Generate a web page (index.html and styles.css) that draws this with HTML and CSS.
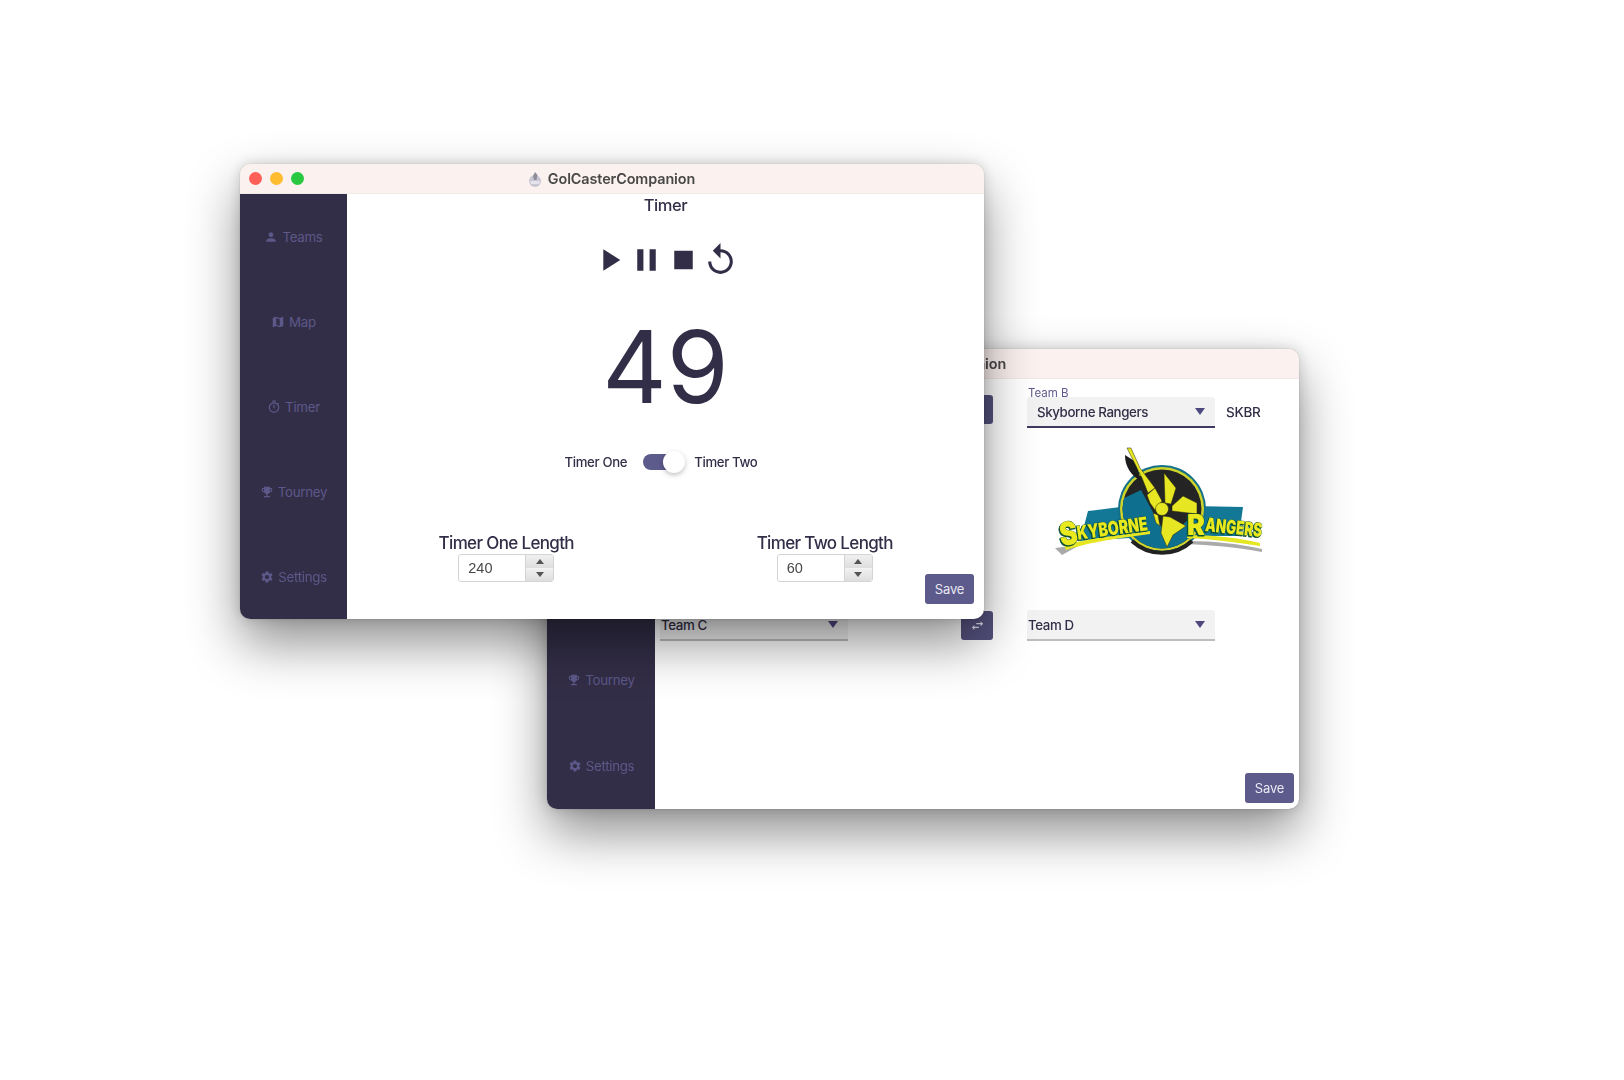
FILE: index.html
```html
<!DOCTYPE html>
<html lang="en">
<head>
<meta charset="utf-8">
<title>GolCasterCompanion</title>
<link rel="stylesheet" href="styles.css">
</head>
<body>
<svg class="defs" width="0" height="0" aria-hidden="true">
  <symbol id="i-person" viewBox="0 0 24 24"><path d="M12 12c2.21 0 4-1.79 4-4s-1.79-4-4-4-4 1.79-4 4 1.79 4 4 4zm0 2c-2.67 0-8 1.34-8 4v2h16v-2c0-2.66-5.33-4-8-4z"/></symbol>
  <symbol id="i-map" viewBox="0 0 24 24"><path d="M20.5 3l-.16.03L15 5.1 9 3 3.36 4.9c-.21.07-.36.25-.36.48V20.5c0 .28.22.5.5.5l.16-.03L9 18.9l6 2.1 5.64-1.9c.21-.07.36-.25.36-.48V3.5c0-.28-.22-.5-.5-.5zM15 19l-6-2.11V5l6 2.11V19z"/></symbol>
  <symbol id="i-timer" viewBox="0 0 24 24"><path d="M15 1H9v2h6V1zm-4 13h2V8h-2v6zm8.03-6.61l1.42-1.42c-.43-.51-.9-.99-1.41-1.41l-1.42 1.42C16.07 4.74 14.12 4 12 4c-4.97 0-9 4.03-9 9s4.02 9 9 9 9-4.03 9-9c0-2.12-.74-4.07-1.97-5.61zM12 20c-3.87 0-7-3.13-7-7s3.13-7 7-7 7 3.13 7 7-3.13 7-7 7z"/></symbol>
  <symbol id="i-trophy" viewBox="0 0 24 24"><path d="M19 5h-2V3H7v2H5c-1.1 0-2 .9-2 2v1c0 2.55 1.92 4.63 4.39 4.94.63 1.5 1.98 2.63 3.61 2.96V19H7v2h10v-2h-4v-3.1c1.63-.33 2.98-1.46 3.61-2.96C19.08 12.63 21 10.55 21 8V7c0-1.1-.9-2-2-2zM5 8V7h2v3.82C5.84 10.4 5 9.3 5 8zm14 0c0 1.3-.84 2.4-2 2.82V7h2v1z"/></symbol>
  <symbol id="i-cog" viewBox="0 0 24 24"><path d="M19.14 12.94c.04-.3.06-.61.06-.94 0-.32-.02-.64-.07-.94l2.03-1.58c.18-.14.23-.41.12-.61l-1.92-3.32c-.12-.22-.37-.29-.59-.22l-2.39.96c-.5-.38-1.03-.7-1.62-.94l-.36-2.54c-.04-.24-.24-.41-.48-.41h-3.84c-.24 0-.43.17-.47.41l-.36 2.54c-.59.24-1.13.57-1.62.94l-2.39-.96c-.22-.08-.47 0-.59.22L2.74 8.87c-.12.21-.08.47.12.61l2.03 1.58c-.05.3-.09.63-.09.94s.02.64.07.94l-2.03 1.58c-.18.14-.23.41-.12.61l1.92 3.32c.12.22.37.29.59.22l2.39-.96c.5.38 1.03.7 1.62.94l.36 2.54c.05.24.24.41.48.41h3.84c.24 0 .44-.17.47-.41l.36-2.54c.59-.24 1.13-.56 1.62-.94l2.39.96c.22.08.47 0 .59-.22l1.92-3.32c.12-.22.07-.47-.12-.61l-2.01-1.58zM12 15.6c-1.98 0-3.6-1.62-3.6-3.6s1.62-3.6 3.6-3.6 3.6 1.62 3.6 3.6-1.62 3.6-3.6 3.6z"/></symbol>
  <symbol id="i-swap" viewBox="0 0 24 24"><path d="M6.99 11L3 15l3.99 4v-3H14v-2H6.99v-3zM21 9l-3.99-4v3H10v2h7.01v3L21 9z"/></symbol>
  <symbol id="i-play" viewBox="0 0 24 24"><path d="M8 5v14l11-7z"/></symbol>
  <symbol id="i-pause" viewBox="0 0 24 24"><path d="M6 19h4V5H6v14zm8-14v14h4V5h-4z"/></symbol>
  <symbol id="i-stop" viewBox="0 0 24 24"><path d="M6 6h12v12H6z"/></symbol>
  <symbol id="i-replay" viewBox="0 0 24 24"><path d="M12 5V1L7 6l5 5V7c3.31 0 6 2.69 6 6s-2.69 6-6 6-6-2.69-6-6H4c0 4.42 3.58 8 8 8s8-3.58 8-8-3.58-8-8-8z"/></symbol>
  <symbol id="i-app" viewBox="0 0 16 16"><circle cx="8" cy="10" r="6" fill="#c9c6d3"/><path d="M8 1l2.5 3-1 5H7L6 5z" fill="#8f8c99"/><path d="M3 10h10l-1 3H4z" fill="#e4e2ea"/></symbol>
  <clipPath id="logo-disc"><circle cx="122" cy="71" r="39.5"/></clipPath>
</svg>

<section class="window window-back">
  <header class="titlebar">
    <div class="lights"><i class="light red"></i><i class="light amber"></i><i class="light green"></i></div>
    <div class="title-wrap"><svg class="app-icon"><use href="#i-app"/></svg><span class="title">GolCasterCompanion</span></div>
  </header>
  <div class="body">
    <nav class="sidebar">
      <a class="nav"></a>
      <a class="nav"></a>
      <a class="nav"></a>
      <a class="nav"><svg class="nav-icon"><use href="#i-trophy"/></svg>Tourney</a>
      <a class="nav"><svg class="nav-icon"><use href="#i-cog"/></svg>Settings</a>
    </nav>
    <main class="teams">
      <div class="team-col">
        <div class="select active"></div>
      </div>
      <div class="abbr"></div>
      <button class="swap"><svg class="swap-icon"><use href="#i-swap"/></svg></button>
      <div class="spacer"></div>
      <div class="team-col">
        <label class="field-label">Team B</label>
        <div class="select active"><span class="indent">Skyborne Rangers</span><i class="caret"></i></div>
      </div>
      <div class="abbr">SKBR</div>

      <div class="logo-row">
        <svg class="logo" viewBox="0 0 240 130" width="240" height="130" role="img" aria-label="Skyborne Rangers logo">
          <path class="l-shadow" d="M15 110 L40 107 L22 117z"/>
          <path class="l-shadow" d="M147 103 C175 103 200 106 222 111 L222 114 C195 109 170 107 147 106z"/>
          <path class="l-teal" d="M48 73 L88 68 L90 100 L40 103z"/>
          <path class="l-teal" d="M152 68 L203 69 L199 98 L152 98z"/>
          <circle class="l-ring" cx="122" cy="71" r="44"/>
          <circle class="l-yellow-ring" cx="122" cy="71" r="42"/>
          <circle class="l-black" cx="122" cy="71" r="39.5"/>
          <path class="l-lower" clip-path="url(#logo-disc)" d="M80 62 L101 52 L114 76 L128 100 L150 80 L165 78 L165 115 L80 115z"/>
          <path class="l-bottom" d="M92 103 A44 44 0 0 0 152 103"/>
          <path class="l-dark" d="M85 17 C85 30 92 38 101 43 L96 24z"/>
          <path class="l-star" d="M87 10 L91 10 L100 30 L115 50 L108 55 L102 40z"/>
          <path class="l-star" d="M107 57 L115 50 L122 63 L115 72 L110 65z"/>
          <path class="l-star" d="M124 35 L136 50 L131 66 L125 65z"/>
          <path class="l-star" d="M132 68 L143 58 L157 65 L157 76 L132 73z"/>
          <path class="l-star" d="M123 78 L130 79 L146 88 L133 97 L127 109 L121 95z"/>
          <path class="l-star" d="M113 75 L118 77 L120 88 L116 85z"/>
          <circle class="l-hub" cx="122" cy="71" r="6.5"/>
          <path class="l-swoosh" d="M24 107 C50 100 80 97 110 93 L110 96 C80 100 50 104 26 112z"/>
          <path class="l-swoosh" d="M147 97 C175 97 200 100 220 105 L220 108 C195 104 170 101 147 100z"/>
          <g class="l-words">
            <text class="l-cap" x="20" y="107" textLength="18" lengthAdjust="spacingAndGlyphs" transform="rotate(-8 28 100)">S</text>
            <text class="l-word" x="37" y="97" textLength="71" lengthAdjust="spacingAndGlyphs" transform="rotate(-8 72 92)">KYBORNE</text>
            <text class="l-cap2" x="147" y="97" textLength="18" lengthAdjust="spacingAndGlyphs">R</text>
            <text class="l-word" x="165" y="96" textLength="57" lengthAdjust="spacingAndGlyphs" transform="rotate(6 193 92)">ANGERS</text>
          </g>
        </svg>
      </div>

      <div class="team-col bottom">
        <div class="select"><span>Team C</span><i class="caret"></i></div>
      </div>
      <div class="abbr"></div>
      <button class="swap bottom-swap"><svg class="swap-icon"><use href="#i-swap"/></svg></button>
      <div class="spacer"></div>
      <div class="team-col bottom">
        <div class="select"><span>Team D</span><i class="caret"></i></div>
      </div>
      <div class="abbr"></div>

      <button class="save save-teams">Save</button>
    </main>
  </div>
</section>

<section class="window window-front">
  <header class="titlebar">
    <div class="lights"><i class="light red"></i><i class="light amber"></i><i class="light green"></i></div>
    <div class="title-wrap"><svg class="app-icon"><use href="#i-app"/></svg><span class="title">GolCasterCompanion</span></div>
  </header>
  <div class="body">
    <nav class="sidebar">
      <a class="nav"><svg class="nav-icon"><use href="#i-person"/></svg>Teams</a>
      <a class="nav"><svg class="nav-icon"><use href="#i-map"/></svg>Map</a>
      <a class="nav"><svg class="nav-icon"><use href="#i-timer"/></svg>Timer</a>
      <a class="nav"><svg class="nav-icon"><use href="#i-trophy"/></svg>Tourney</a>
      <a class="nav"><svg class="nav-icon"><use href="#i-cog"/></svg>Settings</a>
    </nav>
    <main class="timer">
      <h1 class="timer-title">Timer</h1>
      <div class="controls">
        <svg class="ctl"><use href="#i-play"/></svg>
        <svg class="ctl"><use href="#i-pause"/></svg>
        <svg class="ctl"><use href="#i-stop"/></svg>
        <svg class="ctl"><use href="#i-replay"/></svg>
      </div>
      <div class="count">49</div>
      <div class="toggle-row">
        <span class="toggle-label right">Timer One</span>
        <span class="toggle"><i class="knob"></i></span>
        <span class="toggle-label">Timer Two</span>
      </div>
      <div class="lengths">
        <div class="length">
          <div class="length-label">Timer One Length</div>
          <div class="spinner"><span class="spin-value">240</span><span class="spin-btns"><i class="spin-btn"><b class="up"></b></i><i class="spin-btn"><b class="down"></b></i></span></div>
        </div>
        <div class="length length-two">
          <div class="length-label">Timer Two Length</div>
          <div class="spinner"><span class="spin-value">60</span><span class="spin-btns"><i class="spin-btn"><b class="up"></b></i><i class="spin-btn"><b class="down"></b></i></span></div>
        </div>
        <button class="save save-timer">Save</button>
      </div>
    </main>
  </div>
</section>
</body>
</html>
```
FILE: styles.css
```css
* { box-sizing: border-box; }
html, body { margin: 0; height: 100%; background: #fff; }
body { position: relative; width: 1624px; height: 1080px; overflow: hidden; font-family: Inter, "Liberation Sans", sans-serif; color: #332e48; }
.defs { position: absolute; }

.window { position: absolute; display: flex; flex-direction: column; border-radius: 10px; overflow: hidden; background: #fff; box-shadow: 0 24px 52px rgba(0,0,0,.44), 0 0 14px rgba(0,0,0,.16), 0 0 1px rgba(0,0,0,.4); }
.window > * { filter: blur(.5px); }
.window-front { left: 240px; top: 164px; width: 744px; height: 455px; }
.window-back { left: 547px; top: 349px; width: 752px; height: 460px; }

.titlebar { position: relative; flex: 0 0 30px; display: flex; align-items: center; justify-content: center; background: #fbf1ef; border-bottom: 1px solid #efe9e8; }
.lights { position: absolute; left: 9px; top: 8px; display: flex; gap: 8px; }
.light { width: 13px; height: 13px; border-radius: 50%; }
.red { background: #ff5f57; }
.amber { background: #febc2e; }
.green { background: #28c840; }
.title-wrap { display: flex; align-items: center; gap: 5px; margin-right: 2px; }
.app-icon { width: 16px; height: 16px; }
.title { font-size: 14.4px; font-weight: 600; color: #484848; letter-spacing: -.1px; }

.body { flex: 1; display: flex; min-height: 0; }
.sidebar { flex: 0 0 107px; display: flex; flex-direction: column; background: #332e47; }
.window-back .sidebar { flex-basis: 108px; }
.nav { flex: 1; display: flex; align-items: center; justify-content: center; gap: 4px; font-size: 13.3px; letter-spacing: -.28px; color: #5c5889; }
.nav-icon { width: 14px; height: 14px; fill: #5c5889; }

.timer { flex: 1; display: flex; flex-direction: column; align-items: center; }
.timer-title { margin: 1px 0 0; font-size: 16.5px; line-height: 20px; font-weight: 450; letter-spacing: -.45px; }
.controls { display: flex; margin: 26px 2px 0 0; }
.ctl { width: 37px; height: 38px; fill: #332e48; overflow: visible; }
.count { margin-top: 30px; font-size: 100px; line-height: 116px; font-weight: 400; letter-spacing: 0; }
.toggle-row { display: flex; align-items: center; margin: 25px 9px 0 0; height: 24px; }
.toggle-label { font-size: 13.2px; font-weight: 450; letter-spacing: -.35px; }
.toggle-label.right { margin-right: 16px; }
.toggle { position: relative; display: block; width: 37px; height: 16px; margin-right: 14px; border-radius: 8px; background: #5d5a8c; }
.knob { position: absolute; right: -5px; top: -3px; width: 22px; height: 22px; border-radius: 50%; background: #fff; box-shadow: 0 2px 5px rgba(0,0,0,.25); }

.lengths { align-self: stretch; display: grid; grid-template-columns: 1fr 1fr; margin-top: 59px; flex: 1; }
.length { grid-row: 1; grid-column: 1; display: flex; flex-direction: column; align-items: center; }
.length-two { grid-column: 2; }
.length-label { font-size: 17px; line-height: 20px; font-weight: 450; letter-spacing: -.65px; }
.spinner { display: flex; width: 96px; height: 28px; margin-top: 1px; border: 1px solid #d4d4d4; border-radius: 3px; background: #fff; overflow: hidden; }
.spin-value { flex: 1; padding-left: 9px; font: 14.5px/26px "Liberation Sans", sans-serif; color: #484848; }
.spin-btns { flex: 0 0 28px; display: flex; flex-direction: column; gap: 1px; background: #f4f4f4; border-left: 1px solid #d4d4d4; }
.spin-btn { flex: 1; display: flex; align-items: center; justify-content: center; background: linear-gradient(#f0f0f0, #dedede); }
.spin-btn b { width: 0; height: 0; border-left: 4.5px solid transparent; border-right: 4.5px solid transparent; }
.up { border-bottom: 5px solid #555; }
.down { border-top: 5px solid #555; }
.save { display: block; width: 49px; height: 30px; padding: 0; border: 0; border-radius: 3px; background: #5d5a8c; color: #e9e8f2; font: 13px Inter, sans-serif; letter-spacing: -.2px; }
.save-timer { grid-column: 2; grid-row: 1; justify-self: end; align-self: end; margin: 0 10px 15px 0; }

.teams { flex: 1; display: grid; grid-template-columns: 188px 113px 32px 34px 188px auto; grid-template-rows: 49px 182px 32px 1fr; padding-left: 5px; }
.team-col { display: flex; flex-direction: column; justify-content: flex-end; }
.team-col.bottom { justify-content: flex-start; }
.field-label { font-size: 11.5px; line-height: 13px; color: #5d5a8c; padding: 0 0 0 1px; margin-bottom: -3px; }
.select { display: flex; align-items: center; justify-content: space-between; height: 31px; padding: 0 10px 0 1px; background: #f2f2f2; border-bottom: 2px solid #bdbdbd; border-radius: 3px 3px 0 0; font-size: 13.3px; font-weight: 450; letter-spacing: -.38px; }
.select.active { border-bottom-color: #3f3a60; }
.indent { padding-left: 9px; }
.caret { width: 0; height: 0; border-left: 5.5px solid transparent; border-right: 5.5px solid transparent; border-top: 7px solid #4d4980; }
.abbr { align-self: end; padding: 0 0 8px 11px; font-size: 13.5px; font-weight: 450; letter-spacing: -.25px; }
.swap { align-self: end; width: 32px; height: 29px; margin-bottom: 4px; padding: 0; border: 0; border-radius: 3px; background: #55517f; display: flex; align-items: center; justify-content: center; }
.bottom-swap { align-self: start; margin: 1px 0 0; }
.swap-icon { width: 15px; height: 15px; fill: #e3e2ee; }
.logo-row { grid-column: 1 / -1; padding: 10px 0 0 380px; }
.logo { display: block; overflow: visible; }
.save-teams { grid-column: 1 / -1; justify-self: end; align-self: end; margin: 0 5px 6px 0; width: 49px; }

.l-shadow { fill: #555; opacity: .5; }
.l-teal { fill: #137896; }
.l-lower { fill: #0f6f8e; }
.l-bottom { fill: none; stroke: #222; stroke-width: 4; }
.l-ring { fill: #14708a; }
.l-yellow-ring { fill: #cfd42a; }
.l-black { fill: #242424; }
.l-dark { fill: #1c1c1c; }
.l-star, .l-hub { fill: #e6e622; stroke: #26260e; stroke-width: .5; }
.l-swoosh { fill: #e6e622; }
.l-words { filter: drop-shadow(-1px 1.5px 0 #0b4f35); }
.l-words text { font-family: Inter, "Liberation Sans", sans-serif; font-weight: 900; fill: #e9e91d; stroke: #0b4f35; stroke-width: .8; paint-order: stroke; }
.l-word { font-size: 19px; }
.l-cap { font-size: 32px; }
.l-cap2 { font-size: 28px; }
```
